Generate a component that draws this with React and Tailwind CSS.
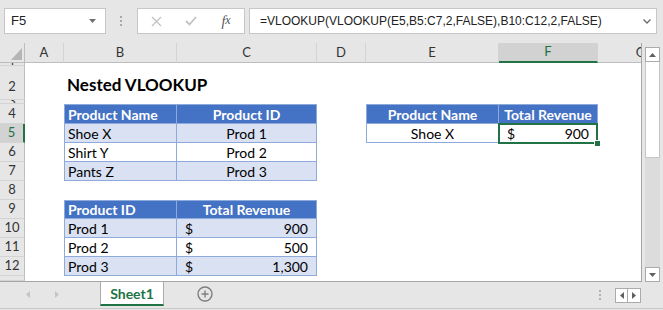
import React from 'react';

const W = {
  A: 'w-[39px]',
  B: 'w-[113px]',
  C: 'w-[140px]',
  D: 'w-[49px]',
  E: 'w-[133px]',
  F: 'w-[99px]',
  G: 'w-[86px]',
};
const COLS = ['A', 'B', 'C', 'D', 'E', 'F', 'G'];

const HDR = 'shrink-0 flex items-center bg-[#4472c4] text-white font-bold border-t border-r border-b border-[#8eaadb] text-[14px]';
const DAT = 'shrink-0 flex items-center border-r border-b border-[#8eaadb] text-[14px]';

function RowHead({ label, active, bottom }) {
  let cls = 'w-[25px] shrink-0 h-full overflow-hidden flex justify-center border-b border-b-[#d4d4d4] ';
  cls += bottom ? 'items-end pb-[3px] ' : 'items-center ';
  cls += active
    ? 'bg-[#d2d2d2] border-r-2 border-r-[#217346] text-[#217346]'
    : 'bg-[#e6e6e6] border-r border-r-[#bdbdbd] text-[#333]';
  return <div className={cls}>{label}</div>;
}

function Row({ label, h, active, bottom, children }) {
  return (
    <div className={`flex shrink-0 ${h}`}>
      <RowHead label={label} active={active} bottom={bottom} />
      {children}
    </div>
  );
}

const Empty = ({ col }) => <div className={`${W[col]} shrink-0`} />;

function Money({ value, band }) {
  return (
    <div className={`${W.C} ${DAT} justify-between px-[8px] ${band ? 'bg-[#d9e1f2]' : 'bg-white'}`}>
      <span>$</span>
      <span>{value}</span>
    </div>
  );
}

function ColumnHeader() {
  return (
    <div className="flex h-[20px] shrink-0 bg-[#e6e6e6] text-[#333]">
      <div className="w-[25px] shrink-0 border-r border-b border-[#bdbdbd] relative">
        <svg className="absolute left-0 top-0" width="25" height="20">
          <polygon points="22,5 22,17 11,17" fill="#b5b5b5" />
        </svg>
      </div>
      {COLS.map((c) =>
        c === 'F' ? (
          <div
            key={c}
            className={`${W[c]} shrink-0 flex items-center justify-center bg-[#d2d2d2] border-r border-r-[#d4d4d4] border-b-2 border-b-[#217346] text-[#217346]`}
          >
            {c}
          </div>
        ) : (
          <div
            key={c}
            className={`${W[c]} shrink-0 flex items-center justify-center border-r border-r-[#d4d4d4] border-b border-b-[#bdbdbd]`}
          >
            {c}
          </div>
        )
      )}
    </div>
  );
}

function Grid() {
  return (
    <div className="w-[642px] h-[239px] shrink-0 overflow-hidden border-r border-b border-[#a6a6a6] bg-white font-['Lato',sans-serif] text-[13px] flex flex-col">
      <ColumnHeader />
      <Row label="1" h="h-[3px]" />
      <Row label="2" h="h-[34px]" bottom>
        <Empty col="A" />
        <div className={`${W.B} shrink-0 flex items-end pb-[3px] pl-[3px] whitespace-nowrap text-[17px] font-bold text-black`}>
          Nested VLOOKUP
        </div>
      </Row>
      <Row label="3" h="h-[4px]" />
      <Row label="4" h="h-[20px]">
        <Empty col="A" />
        <div className={`${W.B} ${HDR} border-l pl-[3px]`}>Product Name</div>
        <div className={`${W.C} ${HDR} justify-center`}>Product ID</div>
        <Empty col="D" />
        <div className={`${W.E} ${HDR} border-l justify-center`}>Product Name</div>
        <div className={`${W.F} ${HDR} justify-center`}>Total Revenue</div>
      </Row>
      <Row label="5" h="h-[19px]" active>
        <Empty col="A" />
        <div className={`${W.B} ${DAT} border-l pl-[3px] bg-[#d9e1f2]`}>Shoe X</div>
        <div className={`${W.C} ${DAT} justify-center bg-[#d9e1f2]`}>Prod 1</div>
        <Empty col="D" />
        <div className={`${W.E} ${DAT} border-l justify-center bg-white`}>Shoe X</div>
        <div className={`${W.F} ${DAT} relative justify-between px-[8px] bg-white`}>
          <span>$</span>
          <span>900</span>
          <div className="absolute -left-[1px] -top-[1px] w-[100px] h-[21px] border-2 border-[#217346]" />
          <div className="absolute left-[95px] top-[16px] w-[7px] h-[7px] bg-[#217346] border border-white" />
        </div>
      </Row>
      <Row label="6" h="h-[19px]">
        <Empty col="A" />
        <div className={`${W.B} ${DAT} border-l pl-[3px] bg-white`}>Shirt Y</div>
        <div className={`${W.C} ${DAT} justify-center bg-white`}>Prod 2</div>
      </Row>
      <Row label="7" h="h-[19px]">
        <Empty col="A" />
        <div className={`${W.B} ${DAT} border-l pl-[3px] bg-[#d9e1f2]`}>Pants Z</div>
        <div className={`${W.C} ${DAT} justify-center bg-[#d9e1f2]`}>Prod 3</div>
      </Row>
      <Row label="8" h="h-[19px]" />
      <Row label="9" h="h-[19px]">
        <Empty col="A" />
        <div className={`${W.B} ${HDR} border-l pl-[3px]`}>Product ID</div>
        <div className={`${W.C} ${HDR} justify-center`}>Total Revenue</div>
      </Row>
      <Row label="10" h="h-[19px]">
        <Empty col="A" />
        <div className={`${W.B} ${DAT} border-l pl-[3px] bg-[#d9e1f2]`}>Prod 1</div>
        <Money value="900" band />
      </Row>
      <Row label="11" h="h-[19px]">
        <Empty col="A" />
        <div className={`${W.B} ${DAT} border-l pl-[3px] bg-white`}>Prod 2</div>
        <Money value="500" />
      </Row>
      <Row label="12" h="h-[19px]">
        <Empty col="A" />
        <div className={`${W.B} ${DAT} border-l pl-[3px] bg-[#d9e1f2]`}>Prod 3</div>
        <Money value="1,300" band />
      </Row>
      <Row label="" h="h-[5px]" />
    </div>
  );
}

function VScroll() {
  return (
    <div className="ml-[3px] w-[15px] h-[239px] shrink-0 flex flex-col pt-[4px]">
      <div className="h-[15px] shrink-0 bg-white border border-[#ababab] flex items-center justify-center">
        <svg width="7" height="4"><polygon points="0,4 7,4 3.5,0" fill="#606060" /></svg>
      </div>
      <div className="h-[96px] shrink-0 bg-white border-x border-b border-[#c6c6c6]" />
      <div className="flex-1 bg-[#dcdcdc]" />
      <div className="h-[15px] shrink-0 bg-white border border-[#ababab] flex items-center justify-center">
        <svg width="7" height="4"><polygon points="0,0 7,0 3.5,4" fill="#606060" /></svg>
      </div>
    </div>
  );
}

function FormulaBar() {
  return (
    <div className="h-[43px] shrink-0 flex items-start pt-[8px] pl-[4px] pr-[6px] font-['Liberation_Sans',sans-serif]">
      <div className="w-[102px] h-[26px] shrink-0 bg-white border border-[#c6c6c6] flex items-center justify-between pl-[6px] pr-[9px] text-[13px] text-[#222]">
        <span>F5</span>
        <svg width="7" height="4"><polygon points="0,0 7,0 3.5,4" fill="#707070" /></svg>
      </div>
      <div className="ml-[14px] w-[2px] h-[26px] shrink-0 flex flex-col justify-center gap-[2px]">
        <div className="w-[2px] h-[2px] bg-[#a8a8a8]" />
        <div className="w-[2px] h-[2px] bg-[#a8a8a8]" />
        <div className="w-[2px] h-[2px] bg-[#a8a8a8]" />
      </div>
      <div className="ml-[15px] w-[108px] h-[26px] shrink-0 bg-white border border-[#c6c6c6] flex items-center">
        <div className="w-[36px] flex justify-center">
          <svg width="11" height="11">
            <path d="M1 1 L10 10 M10 1 L1 10" stroke="#c2c2c2" strokeWidth="1.3" fill="none" />
          </svg>
        </div>
        <div className="w-[34px] flex justify-center">
          <svg width="12" height="10">
            <path d="M1 5 L4.5 8.5 L11 1" stroke="#c2c2c2" strokeWidth="1.8" fill="none" />
          </svg>
        </div>
        <div className="w-[36px] flex justify-center font-['Liberation_Serif',serif] italic text-[14px] text-[#555]">
          f<span className="text-[12px]">x</span>
        </div>
      </div>
      <div className="ml-[4px] flex-1 h-[26px] bg-white border border-[#c6c6c6] flex items-center justify-between pl-[10px] pr-[5px] text-[12px] text-[#222] whitespace-nowrap">
        <span>=VLOOKUP(VLOOKUP(E5,B5:C7,2,FALSE),B10:C12,2,FALSE)</span>
        <svg width="8" height="5">
          <path d="M0.5 0.5 L4 4 L7.5 0.5" stroke="#6a6a6a" strokeWidth="1.3" fill="none" />
        </svg>
      </div>
    </div>
  );
}

function TabBar() {
  return (
    <div className="h-[27px] shrink-0 flex items-start border-b border-[#c8c8c8]">
      <div className="w-[100px] h-[24px] shrink-0 flex items-center">
        <svg className="ml-[26px]" width="4" height="7"><polygon points="4,0 4,7 0,3.5" fill="#c4c4c4" /></svg>
        <svg className="ml-[25px]" width="4" height="7"><polygon points="0,0 0,7 4,3.5" fill="#c4c4c4" /></svg>
      </div>
      <div className="w-[64px] h-[24px] shrink-0 bg-white border-x border-[#ababab] border-b-2 border-b-[#217346] flex items-center justify-center font-['Lato',sans-serif] font-bold text-[14px] text-[#217346]">
        Sheet1
      </div>
      <div className="ml-[33px] h-[24px] flex items-center">
        <svg width="16" height="16">
          <circle cx="8" cy="8" r="7" stroke="#7f7f7f" strokeWidth="1.4" fill="none" />
          <path d="M8 4.5 V11.5 M4.5 8 H11.5" stroke="#7f7f7f" strokeWidth="1.4" />
        </svg>
      </div>
      <div className="flex-1" />
      <div className="h-[24px] w-[2px] shrink-0 flex flex-col justify-center gap-[2px] mt-[1px]">
        <div className="w-[2px] h-[2px] bg-[#b0b0b0]" />
        <div className="w-[2px] h-[2px] bg-[#b0b0b0]" />
        <div className="w-[2px] h-[2px] bg-[#b0b0b0]" />
      </div>
      <div className="ml-[14px] mt-[6px] mr-[22px] flex shrink-0">
        <div className="w-[13px] h-[15px] bg-white border border-[#ababab] flex items-center justify-center">
          <svg width="4" height="7"><polygon points="4,0 4,7 0,3.5" fill="#606060" /></svg>
        </div>
        <div className="w-[13px] h-[15px] bg-white border border-l-0 border-[#ababab] flex items-center justify-center">
          <svg width="4" height="7"><polygon points="0,0 0,7 4,3.5" fill="#606060" /></svg>
        </div>
      </div>
    </div>
  );
}

export default function App() {
  return (
    <div className="w-[663px] h-[310px] overflow-hidden bg-[#e6e6e6] flex flex-col">
      <FormulaBar />
      <div className="flex shrink-0">
        <Grid />
        <VScroll />
      </div>
      <TabBar />
    </div>
  );
}
